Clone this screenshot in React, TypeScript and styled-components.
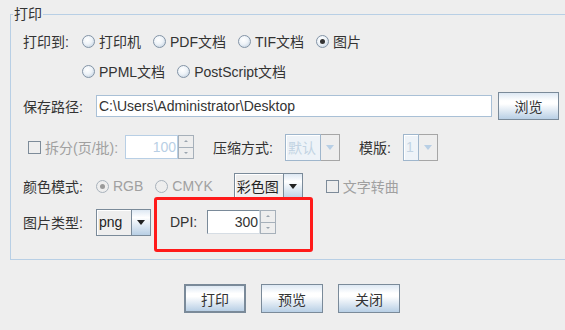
import styled, { createGlobalStyle, css } from 'styled-components'

const GlobalStyle = createGlobalStyle`
    html, body {
        margin: 0;
        padding: 0;
        background: #eeeeee;
        overflow: hidden;
    }
    body {
        font-family: "Liberation Sans", "Noto Sans CJK SC", sans-serif;
        font-size: 14px;
        color: #333333;
    }
`

const BLUE = '#b8cfe5'
const STEEL = '#7a8a99'

const Page = styled.div`
    position: relative;
    width: 565px;
    height: 330px;
    padding: 6px 0 0 10px;
    box-sizing: border-box;
    overflow: hidden;
`

const Group = styled.fieldset`
    margin: 0;
    width: 565px;
    box-sizing: border-box;
    border: 1px solid ${BLUE};
    border-right: none;
    padding: 5px 0 23px 12px;
`

const Legend = styled.legend`
    margin-left: -10px;
    padding: 0 1px;
    line-height: 16px;
`

const Row = styled.div<{ $mt?: number; $indent?: number }>`
    display: flex;
    align-items: center;
    height: 28px;
    margin-top: ${({ $mt }) => $mt || 0}px;
    padding-left: ${({ $indent }) => $indent || 0}px;
`

const Label = styled.span<{ $w?: number; $ml?: number; $disabled?: boolean }>`
    flex: none;
    width: ${({ $w }) => ($w ? `${$w}px` : 'auto')};
    margin-left: ${({ $ml }) => $ml || 0}px;
    color: ${({ $disabled }) => ($disabled ? '#a0a0a0' : '#333333')};
    white-space: nowrap;
`

const Option = styled.label<{ $mr?: number; $ml?: number; $disabled?: boolean }>`
    display: flex;
    align-items: center;
    gap: 4px;
    margin-left: ${({ $ml }) => $ml || 0}px;
    margin-right: ${({ $mr }) => $mr ?? 12}px;
    color: ${({ $disabled }) => ($disabled ? '#a0a0a0' : '#333333')};
    white-space: nowrap;
`

const RadioDot = styled.span<{ $on?: boolean; $disabled?: boolean }>`
    flex: none;
    width: 13px;
    height: 13px;
    box-sizing: border-box;
    border-radius: 50%;
    display: flex;
    align-items: center;
    justify-content: center;
    border: 1px solid ${({ $disabled }) => ($disabled ? '#a8b2bc' : '#8394a6')};
    background: ${({ $disabled }) =>
        $disabled
            ? '#eeeeee'
            : 'radial-gradient(circle at 40% 35%, #ffffff 0%, #eef3f8 45%, #b9cadb 100%)'};
    ${({ $on, $disabled }) =>
        $on &&
        css`
            &::after {
                content: '';
                width: 5px;
                height: 5px;
                border-radius: 50%;
                background: ${$disabled ? '#9a9a9a' : '#333333'};
            }
        `}
`

const Check = styled.span`
    flex: none;
    width: 13px;
    height: 13px;
    box-sizing: border-box;
    border: 1px solid #7d8b99;
    background: #eeeeee;
`

const PathField = styled.div`
    flex: none;
    width: 396px;
    height: 22px;
    box-sizing: border-box;
    border: 1px solid #a9c0d6;
    background: #ffffff;
    padding-left: 2px;
    display: flex;
    align-items: center;
    color: #333333;
    white-space: nowrap;
    overflow: hidden;
`

const Button = styled.button<{ $w: number; $h: number; $default?: boolean }>`
    flex: none;
    width: ${({ $w }) => $w}px;
    height: ${({ $h }) => $h}px;
    box-sizing: border-box;
    border: ${({ $default }) => ($default ? 2 : 1)}px solid ${STEEL};
    background: linear-gradient(#dde8f3 0%, #ffffff 30%, #ffffff 42%, #b8cfe5 100%);
    font: inherit;
    color: #333333;
    padding: 0;
    cursor: pointer;
`

const Spinner = styled.div<{ $w: number }>`
    flex: none;
    display: flex;
    width: ${({ $w }) => $w}px;
    height: 24px;
    box-sizing: border-box;
`

const SpinValue = styled.div<{ $disabled?: boolean }>`
    flex: 1;
    box-sizing: border-box;
    background: #ffffff;
    border: 1px solid ${({ $disabled }) => ($disabled ? BLUE : STEEL)};
    ${({ $disabled }) =>
        !$disabled &&
        css`
            border-right-color: #d6dde4;
            border-bottom-color: #d6dde4;
        `}
    color: ${({ $disabled }) => ($disabled ? BLUE : '#333333')};
    display: flex;
    align-items: center;
    justify-content: flex-end;
    padding-right: 1px;
`

const SpinArrows = styled.div`
    flex: none;
    width: 16px;
    display: flex;
    flex-direction: column;
`

const SpinArrow = styled.div<{ $down?: boolean }>`
    flex: 1;
    box-sizing: border-box;
    border: 1px solid #a6b0ba;
    ${({ $down }) => $down && 'border-top: none;'}
    background: #eeeeee;
    display: flex;
    align-items: center;
    justify-content: center;
    &::after {
        content: '';
        border-left: 2px solid transparent;
        border-right: 2px solid transparent;
        ${({ $down }) =>
            $down ? 'border-top: 2px solid #9aa4ae;' : 'border-bottom: 2px solid #9aa4ae;'}
    }
`

const Combo = styled.div<{ $w: number }>`
    flex: none;
    display: flex;
    width: ${({ $w }) => $w}px;
    height: 27px;
    box-sizing: border-box;
`

const ComboValue = styled.div<{ $disabled?: boolean }>`
    flex: 1;
    box-sizing: border-box;
    border: 1px solid ${({ $disabled }) => ($disabled ? '#9fb6cc' : STEEL)};
    box-shadow: inset 1px 1px 0 #ffffff;
    background: ${({ $disabled }) => ($disabled ? '#eef3f8' : '#eeeeee')};
    color: ${({ $disabled }) => ($disabled ? '#c2d3e3' : '#222222')};
    display: flex;
    align-items: center;
    padding-left: 2px;
    white-space: nowrap;
    overflow: hidden;
`

const ComboArrow = styled.div<{ $disabled?: boolean }>`
    flex: none;
    width: 19px;
    box-sizing: border-box;
    border: 1px solid ${({ $disabled }) => ($disabled ? '#a6a6a6' : STEEL)};
    border-left: none;
    background: ${({ $disabled }) =>
        $disabled ? '#eeeeee' : 'linear-gradient(#dde8f3 0%, #ffffff 30%, #b8cfe5 100%)'};
    display: flex;
    align-items: center;
    justify-content: center;
    &::after {
        content: '';
        border-left: 4px solid transparent;
        border-right: 4px solid transparent;
        border-top: 5px solid ${({ $disabled }) => ($disabled ? BLUE : '#222222')};
    }
`

const Actions = styled.div`
    display: flex;
    gap: 15px;
    margin-top: 24px;
    padding-left: 174px;
`

const Highlight = styled.div`
    position: absolute;
    left: 154px;
    top: 197px;
    width: 159px;
    height: 55px;
    box-sizing: border-box;
    border: 3px solid #ff1a1a;
    border-radius: 3px;
    pointer-events: none;
`

const Radio = ({ text, on, disabled, mr }: { text: string; on?: boolean; disabled?: boolean; mr?: number }) => (
    <Option $disabled={disabled} $mr={mr}>
        <RadioDot $on={on} $disabled={disabled} />
        {text}
    </Option>
)

const NumberSpinner = ({ value, w, disabled }: { value: string; w: number; disabled?: boolean }) => (
    <Spinner $w={w}>
        <SpinValue $disabled={disabled}>{value}</SpinValue>
        <SpinArrows>
            <SpinArrow />
            <SpinArrow $down />
        </SpinArrows>
    </Spinner>
)

const Select = ({ value, w, disabled }: { value: string; w: number; disabled?: boolean }) => (
    <Combo $w={w}>
        <ComboValue $disabled={disabled}>{value}</ComboValue>
        <ComboArrow $disabled={disabled} />
    </Combo>
)

export default function App() {
    return (
        <Page>
            <GlobalStyle />
            <Group>
                <Legend>打印</Legend>
                <Row>
                    <Label $w={59}>打印到:</Label>
                    <Radio text="打印机" />
                    <Radio text="PDF文档" />
                    <Radio text="TIF文档" />
                    <Radio text="图片" on />
                </Row>
                <Row $mt={2} $indent={59}>
                    <Radio text="PPML文档" />
                    <Radio text="PostScript文档" />
                </Row>
                <Row $mt={7}>
                    <Label $w={73}>保存路径:</Label>
                    <PathField>C:\Users\Administrator\Desktop</PathField>
                    <Label $w={6} />
                    <Button $w={61} $h={28}>浏览</Button>
                </Row>
                <Row $mt={13} $indent={5}>
                    <Option $disabled $mr={7}>
                        <Check />
                        拆分(页/批):
                    </Option>
                    <NumberSpinner value="100" w={69} disabled />
                    <Label $ml={19} $w={72}>压缩方式:</Label>
                    <Select value="默认" w={55} disabled />
                    <Label $ml={19} $w={44}>模版:</Label>
                    <Select value="1" w={35} disabled />
                </Row>
                <Row $mt={11}>
                    <Label $w={73}>颜色模式:</Label>
                    <Radio text="RGB" on disabled />
                    <Radio text="CMYK" disabled mr={21} />
                    <Select value="彩色图" w={69} />
                    <Option $disabled $mr={0} $ml={23}>
                        <Check />
                        文字转曲
                    </Option>
                </Row>
                <Row $mt={8}>
                    <Label $w={73}>图片类型:</Label>
                    <Select value="png" w={55} />
                    <Label $ml={19} $w={37}>DPI:</Label>
                    <NumberSpinner value="300" w={69} />
                </Row>
            </Group>
            <Actions>
                <Button $w={62} $h={29} $default>打印</Button>
                <Button $w={62} $h={29}>预览</Button>
                <Button $w={62} $h={29}>关闭</Button>
            </Actions>
            <Highlight />
        </Page>
    )
}
